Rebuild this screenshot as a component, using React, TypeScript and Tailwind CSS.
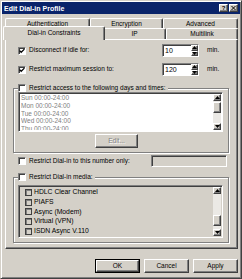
import React from "react";

const RAISED =
  "border border-t-white border-l-white border-r-[#404040] border-b-[#404040] shadow-[inset_-1px_-1px_0_#808080]";
const SUNKEN =
  "border border-t-[#808080] border-l-[#808080] border-r-white border-b-white shadow-[inset_1px_1px_0_#404040]";

function Check({ checked }: { checked?: boolean }) {
  return (
    <span
      className={`inline-flex shrink-0 w-[8px] h-[8px] bg-white items-center justify-center ${SUNKEN}`}
    >
      {checked && (
        <svg width="6" height="6" viewBox="0 0 6 6">
          <path d="M0.6 2.6 L2.2 4.3 L5.4 1.1" stroke="#000" strokeWidth="1.3" fill="none" />
        </svg>
      )}
    </span>
  );
}

function SmallCheck() {
  return <span className="inline-block shrink-0 w-[7px] h-[7px] border border-[#404040] shadow-[inset_1px_1px_0_#808080]" />;
}

function Arrow({ up }: { up?: boolean }) {
  return (
    <svg width="5" height="3" viewBox="0 0 5 3">
      <path d={up ? "M2.5 0 L5 3 L0 3 Z" : "M0 0 L5 0 L2.5 3 Z"} fill="#000" />
    </svg>
  );
}

function ScrollBar({ thumbTop, thumbH }: { thumbTop: number; thumbH: number }) {
  return (
    <div className="w-[8px] h-full flex flex-col shrink-0">
      <div className={`h-[7px] flex items-center justify-center bg-[#d4d0c8] ${RAISED}`}>
        <Arrow up />
      </div>
      <div className="flex-1 bg-[#ebe9e5] flex flex-col">
        <div className={`w-full bg-[#d4d0c8] ${RAISED}`} style={{ marginTop: thumbTop, height: thumbH }} />
      </div>
      <div className={`h-[7px] flex items-center justify-center bg-[#d4d0c8] ${RAISED}`}>
        <Arrow />
      </div>
    </div>
  );
}

function Spin({ value }: { value: string }) {
  return (
    <div className={`w-[37px] h-[13px] flex bg-white ${SUNKEN}`}>
      <div className="flex-1 pl-[2px] pt-[2px] text-[7px]">{value}</div>
      <div className="w-[7px] flex flex-col">
        <div className={`flex-1 flex items-center justify-center bg-[#d4d0c8] ${RAISED}`}>
          <Arrow up />
        </div>
        <div className={`flex-1 flex items-center justify-center bg-[#d4d0c8] ${RAISED}`}>
          <Arrow />
        </div>
      </div>
    </div>
  );
}

function Tab({ label, w, selected }: { label: string; w: string; selected?: boolean }) {
  if (selected) {
    return (
      <div
        className={`relative z-10 ${w} -ml-[2px] -mr-[2px] h-[14px] -mb-[1px] bg-[#d4d0c8] border-t border-l border-r border-t-white border-l-white border-r-[#404040] shadow-[inset_-1px_0_0_#808080] rounded-t-[2px] flex items-start justify-center pt-[3px]`}
      >
        {label}
      </div>
    );
  }
  return (
    <div
      className={`${w} h-full bg-[#d4d0c8] border-t border-l border-r border-t-white border-l-white border-r-[#404040] shadow-[inset_-1px_0_0_#808080] rounded-t-[2px] flex items-start justify-center pt-[2px]`}
    >
      {label}
    </div>
  );
}

function Button({ label, def, disabled, w = "w-[45px]" }: { label: string; def?: boolean; disabled?: boolean; w?: string }) {
  const inner = (
    <div
      className={`h-full w-full flex items-center justify-center bg-[#d4d0c8] ${RAISED} ${
        disabled ? "text-[#808080] [text-shadow:1px_1px_0_#fff]" : ""
      }`}
    >
      {label}
    </div>
  );
  if (def) return <div className={`${w} h-[14px] border border-black`}>{inner}</div>;
  return <div className={`${w} h-[14px]`}>{inner}</div>;
}

export default function App() {
  const days = ["Sun 00:00-24:00", "Mon 00:00-24:00", "Tue 00:00-24:00", "Wed 00:00-24:00", "Thu 00:00-24:00"];
  const media = ["HDLC Clear Channel", "PIAFS", "Async (Modem)", "Virtual (VPN)", "ISDN Async V.110"];
  return (
    <div
      className={`w-[242px] h-[279px] bg-[#d4d0c8] font-['Liberation_Sans',Arial,sans-serif] text-[6.5px] leading-none text-black border border-t-[#d4d0c8] border-l-[#d4d0c8] border-r-[#404040] border-b-[#404040] shadow-[inset_1px_1px_0_#fff,inset_-1px_-1px_0_#808080] p-[1px] flex flex-col overflow-hidden`}
    >
      {/* Title bar */}
      <div className="h-[12px] bg-[#0a246a] flex items-center pl-[2px] pr-[2px]">
        <span className="text-white font-bold text-[7px] flex-1">Edit Dial-in Profile</span>
        <div className="flex gap-[1px]">
          <div className={`w-[9px] h-[8px] bg-[#d4d0c8] ${RAISED} flex items-center justify-center text-[6px] font-bold`}>?</div>
          <div className={`w-[9px] h-[8px] bg-[#d4d0c8] ${RAISED} flex items-center justify-center`}>
            <svg width="5" height="4" viewBox="0 0 5 4">
              <path d="M0.5 0 L4.5 4 M4.5 0 L0.5 4" stroke="#000" strokeWidth="1" />
            </svg>
          </div>
        </div>
      </div>

      {/* Tabs */}
      <div className="mt-[4px] flex h-[10px] pl-[3px]">
        <Tab label="Authentication" w="w-[85px]" />
        <Tab label="Encryption" w="w-[73px]" />
        <Tab label="Advanced" w="w-[75px]" />
      </div>
      <div className="flex h-[11px] pl-[3px] items-end">
        <Tab label="Dial-in Constraints" w="w-[102px]" selected />
        <Tab label="IP" w="w-[63px]" />
        <Tab label="Multilink" w="w-[72px]" />
      </div>

      {/* Panel */}
      <div className={`ml-[3px] w-[233px] h-[210px] shrink-0 flex flex-col ${RAISED}`}>
        <div className="mt-[4px] h-[13px] flex items-center pl-[12px]">
          <div className="w-[144px] flex items-center">
            <Check checked />
            <span className="ml-[3px]">Disconnect if idle for:</span>
          </div>
          <Spin value="10" />
          <span className="ml-[8px]">min.</span>
        </div>
        <div className="mt-[6px] h-[13px] flex items-center pl-[12px]">
          <div className="w-[144px] flex items-center">
            <Check checked />
            <span className="ml-[3px]">Restrict maximum session to:</span>
          </div>
          <Spin value="120" />
          <span className="ml-[8px]">min.</span>
        </div>

        <fieldset className="mt-[8px] ml-[7px] w-[216px] border border-[#808080] shadow-[inset_1px_1px_0_#fff,1px_1px_0_#fff] pb-[4px]">
          <legend className="ml-[4px] pr-[2px] h-[8px] bg-[#d4d0c8]">
            <div className="flex items-center h-[8px]">
              <Check />
              <span className="ml-[3px]">Restrict access to the following days and times:</span>
            </div>
          </legend>
          <div className={`ml-[4px] w-[205px] h-[40px] bg-white flex p-[1px] pl-[2px] ${SUNKEN}`}>
            <div className="flex-1 flex flex-col text-[#808080] leading-[7.8px] overflow-hidden pt-[0px]">
              {days.map((d) => (
                <div key={d}>{d}</div>
              ))}
            </div>
            <ScrollBar thumbTop={1} thumbH={11} />
          </div>
          <div className="mt-[2px] ml-[81px]">
            <Button label="Edit..." disabled w="w-[43px]" />
          </div>
        </fieldset>

        <div className="mt-[2px] h-[12px] flex items-center pl-[12px]">
          <div className="w-[133px] flex items-center">
            <Check />
            <span className="ml-[3px]">Restrict Dial-in to this number only:</span>
          </div>
          <div className={`w-[76px] h-[12px] bg-[#d4d0c8] ${SUNKEN}`} />
        </div>

        <fieldset className="mt-[6px] ml-[7px] w-[216px] border border-[#808080] shadow-[inset_1px_1px_0_#fff,1px_1px_0_#fff] pb-[4px]">
          <legend className="ml-[4px] pr-[2px] h-[8px] bg-[#d4d0c8]">
            <div className="flex items-center h-[8px]">
              <Check />
              <span className="ml-[3px]">Restrict Dial-in media:</span>
            </div>
          </legend>
          <div className={`mt-[4px] ml-[4px] w-[205px] h-[53px] bg-[#d4d0c8] flex p-[1px] ${SUNKEN}`}>
            <div className="flex-1 flex flex-col pl-[5px] pt-[1px] overflow-hidden">
              {media.map((m) => (
                <div key={m} className="h-[10px] flex items-center">
                  <SmallCheck />
                  <span className="ml-[2px] text-[6.8px]">{m}</span>
                </div>
              ))}
            </div>
            <ScrollBar thumbTop={21} thumbH={11} />
          </div>
        </fieldset>
      </div>

      {/* Bottom buttons */}
      <div className="mt-[10px] ml-[93px] flex gap-[4px]">
        <Button label="OK" def />
        <Button label="Cancel" />
        <Button label="Apply" />
      </div>
    </div>
  );
}
